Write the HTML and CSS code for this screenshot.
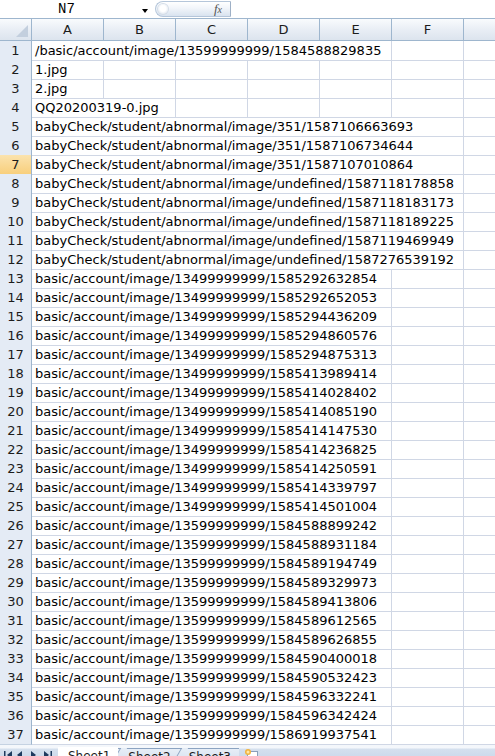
FILE: index.html
```html
<!DOCTYPE html>
<html>
<head>
<meta charset="utf-8">
<link rel="stylesheet" href="styles.css">
</head>
<body>
<div class="app">
  <div class="formula-bar">
    <div class="namebox"><span class="name">N7</span><span class="dd"></span></div>
    <div class="fx-btn"><span class="knob"></span><span class="fx">f<span class="fx-x">x</span></span></div>
    <div class="formula-input"></div>
  </div>
  <div class="sheet">
    <div class="row head">
      <div class="corner"><span class="tri"></span></div>
      <div class="ch">A</div><div class="ch">B</div><div class="ch">C</div><div class="ch">D</div><div class="ch">E</div><div class="ch">F</div><div class="ch rest"></div>
    </div>
    <div class="row"><div class="rh">1</div><div class="cell s5">/basic/account/image/13599999999/1584588829835</div><div class="cell"></div><div class="cell rest"></div></div>
    <div class="row"><div class="rh">2</div><div class="cell">1.jpg</div><div class="cell"></div><div class="cell"></div><div class="cell"></div><div class="cell"></div><div class="cell"></div><div class="cell rest"></div></div>
    <div class="row"><div class="rh">3</div><div class="cell">2.jpg</div><div class="cell"></div><div class="cell"></div><div class="cell"></div><div class="cell"></div><div class="cell"></div><div class="cell rest"></div></div>
    <div class="row"><div class="rh">4</div><div class="cell s2">QQ20200319-0.jpg</div><div class="cell"></div><div class="cell"></div><div class="cell"></div><div class="cell"></div><div class="cell rest"></div></div>
    <div class="row"><div class="rh">5</div><div class="cell s6">babyCheck/student/abnormal/image/351/1587106663693</div><div class="cell rest"></div></div>
    <div class="row"><div class="rh">6</div><div class="cell s6">babyCheck/student/abnormal/image/351/1587106734644</div><div class="cell rest"></div></div>
    <div class="row"><div class="rh sel">7</div><div class="cell s6">babyCheck/student/abnormal/image/351/1587107010864</div><div class="cell rest"></div></div>
    <div class="row"><div class="rh">8</div><div class="cell s6">babyCheck/student/abnormal/image/undefined/1587118178858</div><div class="cell rest"></div></div>
    <div class="row"><div class="rh">9</div><div class="cell s6">babyCheck/student/abnormal/image/undefined/1587118183173</div><div class="cell rest"></div></div>
    <div class="row"><div class="rh">10</div><div class="cell s6">babyCheck/student/abnormal/image/undefined/1587118189225</div><div class="cell rest"></div></div>
    <div class="row"><div class="rh">11</div><div class="cell s6">babyCheck/student/abnormal/image/undefined/1587119469949</div><div class="cell rest"></div></div>
    <div class="row"><div class="rh">12</div><div class="cell s6">babyCheck/student/abnormal/image/undefined/1587276539192</div><div class="cell rest"></div></div>
    <div class="row"><div class="rh">13</div><div class="cell s5">basic/account/image/13499999999/1585292632854</div><div class="cell"></div><div class="cell rest"></div></div>
    <div class="row"><div class="rh">14</div><div class="cell s5">basic/account/image/13499999999/1585292652053</div><div class="cell"></div><div class="cell rest"></div></div>
    <div class="row"><div class="rh">15</div><div class="cell s5">basic/account/image/13499999999/1585294436209</div><div class="cell"></div><div class="cell rest"></div></div>
    <div class="row"><div class="rh">16</div><div class="cell s5">basic/account/image/13499999999/1585294860576</div><div class="cell"></div><div class="cell rest"></div></div>
    <div class="row"><div class="rh">17</div><div class="cell s5">basic/account/image/13499999999/1585294875313</div><div class="cell"></div><div class="cell rest"></div></div>
    <div class="row"><div class="rh">18</div><div class="cell s5">basic/account/image/13499999999/1585413989414</div><div class="cell"></div><div class="cell rest"></div></div>
    <div class="row"><div class="rh">19</div><div class="cell s5">basic/account/image/13499999999/1585414028402</div><div class="cell"></div><div class="cell rest"></div></div>
    <div class="row"><div class="rh">20</div><div class="cell s5">basic/account/image/13499999999/1585414085190</div><div class="cell"></div><div class="cell rest"></div></div>
    <div class="row"><div class="rh">21</div><div class="cell s5">basic/account/image/13499999999/1585414147530</div><div class="cell"></div><div class="cell rest"></div></div>
    <div class="row"><div class="rh">22</div><div class="cell s5">basic/account/image/13499999999/1585414236825</div><div class="cell"></div><div class="cell rest"></div></div>
    <div class="row"><div class="rh">23</div><div class="cell s5">basic/account/image/13499999999/1585414250591</div><div class="cell"></div><div class="cell rest"></div></div>
    <div class="row"><div class="rh">24</div><div class="cell s5">basic/account/image/13499999999/1585414339797</div><div class="cell"></div><div class="cell rest"></div></div>
    <div class="row"><div class="rh">25</div><div class="cell s5">basic/account/image/13499999999/1585414501004</div><div class="cell"></div><div class="cell rest"></div></div>
    <div class="row"><div class="rh">26</div><div class="cell s5">basic/account/image/13599999999/1584588899242</div><div class="cell"></div><div class="cell rest"></div></div>
    <div class="row"><div class="rh">27</div><div class="cell s5">basic/account/image/13599999999/1584588931184</div><div class="cell"></div><div class="cell rest"></div></div>
    <div class="row"><div class="rh">28</div><div class="cell s5">basic/account/image/13599999999/1584589194749</div><div class="cell"></div><div class="cell rest"></div></div>
    <div class="row"><div class="rh">29</div><div class="cell s5">basic/account/image/13599999999/1584589329973</div><div class="cell"></div><div class="cell rest"></div></div>
    <div class="row"><div class="rh">30</div><div class="cell s5">basic/account/image/13599999999/1584589413806</div><div class="cell"></div><div class="cell rest"></div></div>
    <div class="row"><div class="rh">31</div><div class="cell s5">basic/account/image/13599999999/1584589612565</div><div class="cell"></div><div class="cell rest"></div></div>
    <div class="row"><div class="rh">32</div><div class="cell s5">basic/account/image/13599999999/1584589626855</div><div class="cell"></div><div class="cell rest"></div></div>
    <div class="row"><div class="rh">33</div><div class="cell s5">basic/account/image/13599999999/1584590400018</div><div class="cell"></div><div class="cell rest"></div></div>
    <div class="row"><div class="rh">34</div><div class="cell s5">basic/account/image/13599999999/1584590532423</div><div class="cell"></div><div class="cell rest"></div></div>
    <div class="row"><div class="rh">35</div><div class="cell s5">basic/account/image/13599999999/1584596332241</div><div class="cell"></div><div class="cell rest"></div></div>
    <div class="row"><div class="rh">36</div><div class="cell s5">basic/account/image/13599999999/1584596342424</div><div class="cell"></div><div class="cell rest"></div></div>
    <div class="row"><div class="rh">37</div><div class="cell s5">basic/account/image/13599999999/1586919937541</div><div class="cell"></div><div class="cell rest"></div></div>
  </div>
  <div class="tabbar">
    <div class="nav">
      <svg width="56" height="16" viewBox="0 0 56 16">
        <rect x="4" y="5" width="1.5" height="8" fill="#1e3a5f"/>
        <polygon points="7,9 12,5 12,13" fill="#1e3a5f"/>
        <polygon points="17,9 22,5 22,13" fill="#1e3a5f"/>
        <polygon points="36,9 31,5 31,13" fill="#1e3a5f"/>
        <polygon points="49,9 44,5 44,13" fill="#1e3a5f"/>
        <rect x="50.5" y="5" width="1.5" height="8" fill="#1e3a5f"/>
      </svg>
    </div>
    <div class="tab active">Sheet1</div>
    <div class="tab">Sheet2</div>
    <div class="tab">Sheet3</div>
    <div class="newtab">
      <svg width="16" height="14" viewBox="0 0 16 14">
        <rect x="4.5" y="4.5" width="10" height="9" fill="#fff" stroke="#8aa0bb"/>
        <circle cx="5" cy="5" r="3" fill="#f3b33d"/>
        <circle cx="5" cy="5" r="1.5" fill="#fde7a6"/>
      </svg>
    </div>
  </div>
</div>
</body>
</html>
```
FILE: styles.css
```css
html, body {
  margin: 0;
  padding: 0;
  background: #fff;
  height: 756px;
  overflow: hidden;
}
.app {
  width: 495px;
  font-family: "DejaVu Sans", sans-serif;
  color: #000;
}
.formula-bar {
  height: 18px;
  display: flex;
  align-items: stretch;
  background: #fff;
}
.namebox {
  width: 155px;
  display: flex;
  align-items: center;
  position: relative;
}
.name {
  font-family: "Liberation Mono", monospace;
  font-size: 14px;
  margin-left: 58px;
  line-height: 18px;
}
.dd {
  position: absolute;
  left: 142px;
  top: 9px;
  width: 0;
  height: 0;
  border-left: 3.5px solid transparent;
  border-right: 3.5px solid transparent;
  border-top: 4px solid #000;
}
.fx-btn {
  width: 76px;
  height: 16px;
  margin-top: 1px;
  box-sizing: border-box;
  border: 1px solid #b5c6da;
  border-right: 1px solid #9eb0c6;
  border-radius: 8px 0 0 8px;
  background: linear-gradient(#ffffff, #f1f5fa 45%, #d9e3ef);
  display: flex;
  align-items: center;
  justify-content: space-between;
  padding: 0 8px 0 2px;
}
.knob {
  width: 10px;
  height: 10px;
  border-radius: 50%;
  background: radial-gradient(circle at 50% 45%, #ffffff 40%, #cfd9e6 100%);
  box-shadow: 0 0 0 1px #d4dde8;
}
.fx {
  font-family: "Liberation Serif", serif;
  font-style: italic;
  font-size: 13px;
  color: #555;
  line-height: 14px;
}
.fx-x {
  font-size: 10px;
}
.formula-input {
  flex: 1;
  background: #fff;
}
.sheet {
  border-top: 1px solid #9eb6ce;
}
.row {
  display: grid;
  grid-template-columns: 32px repeat(6, 72px) 1fr;
  height: 19px;
}
.row.head {
  height: 22px;
}
.corner, .ch {
  box-sizing: border-box;
  background: linear-gradient(#f9fbfd, #e9eef5 50%, #dce4ee);
  border-right: 1px solid #9eb6ce;
  border-bottom: 1px solid #9eb6ce;
  font-size: 13px;
  color: #1c1c1c;
  text-align: center;
  line-height: 21px;
}
.corner {
  position: relative;
}
.tri {
  position: absolute;
  right: 3px;
  bottom: 3px;
  width: 0;
  height: 0;
  border-left: 12px solid transparent;
  border-bottom: 12px solid #c3cfde;
}
.ch.rest {
  border-right: none;
}
.rh {
  box-sizing: border-box;
  background: #e4ebf5;
  border-right: 1px solid #9eb6ce;
  border-bottom: 1px solid #c5d2e2;
  font-size: 13px;
  color: #1c1c1c;
  text-align: center;
  line-height: 19px;
}
.rh.sel {
  background: linear-gradient(#fbe3ae, #f8cf7c);
  border-bottom-color: #d9b56a;
}
.cell {
  box-sizing: border-box;
  border-right: 1px solid #d0d7e5;
  border-bottom: 1px solid #d0d7e5;
  font-size: 13px;
  line-height: 18px;
  padding: 1px 0 0 3px;
  white-space: nowrap;
  overflow: visible;
  min-width: 0;
}
.cell.rest {
  border-right: none;
}
.s2 { grid-column: span 2; }
.s5 { grid-column: span 5; }
.s6 { grid-column: span 6; }
.tabbar {
  height: 20px;
  display: flex;
  align-items: flex-start;
  border-top: 1px solid #c5d2e2;
  background: linear-gradient(#f4f7fb 0, #f4f7fb 3px, #d5e0ee 4px, #c3d3e8);
}
.nav {
  width: 58px;
  height: 16px;
  margin-top: 1px;
}
.nav svg {
  display: block;
}
.tab {
  position: relative;
  height: 16px;
  margin-top: 3px;
  padding: 0 8px 0 10px;
  font-size: 12px;
  line-height: 16px;
  color: #1c1c1c;
  background: linear-gradient(#e7eef7, #d1ddec);
  border-top: 1px solid #8ba3c1;
}
.tab::before {
  content: "";
  position: absolute;
  left: -3px;
  top: -1px;
  width: 6px;
  height: 18px;
  border-left: 1px solid #8ba3c1;
  transform: skewX(-30deg);
  background: inherit;
}
.tab.active {
  background: #fff;
  border-top: 1px solid #fff;
  margin-top: 2px;
  padding: 0 8px 0 10px;
  z-index: 1;
}
.tab.active::before {
  display: none;
}
.newtab {
  margin-left: 4px;
  margin-top: 2px;
}
.newtab svg {
  display: block;
}
```
